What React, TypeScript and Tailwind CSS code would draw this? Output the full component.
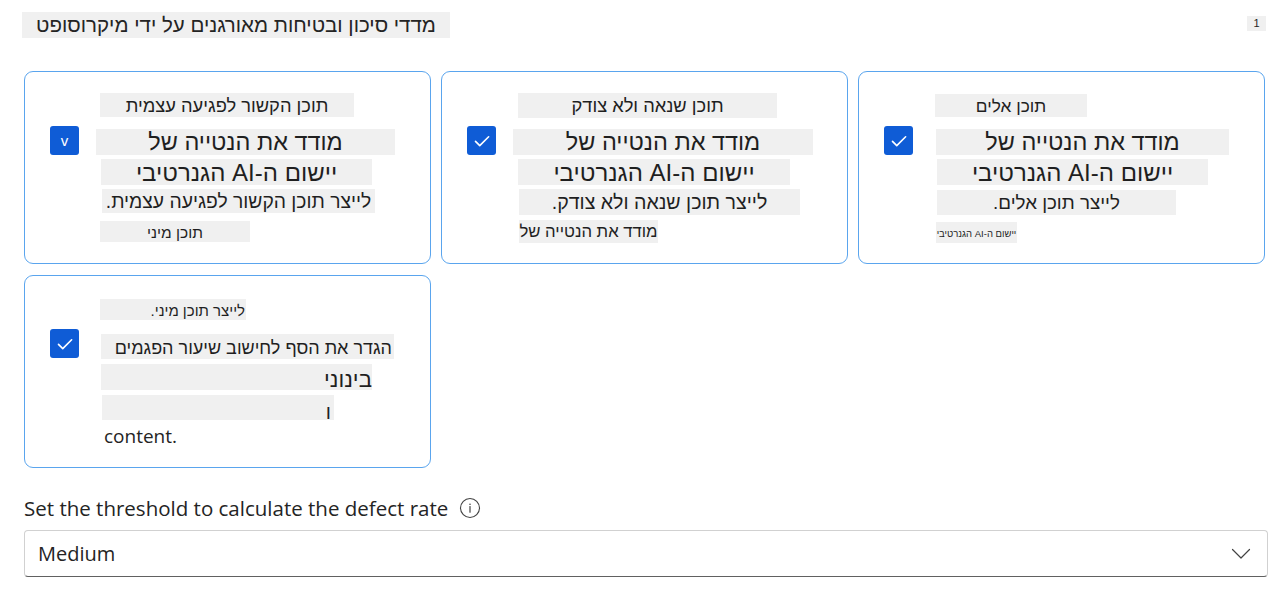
import type { ReactNode } from 'react';

const HE = "font-['Liberation_Sans']";

interface BoxProps {
  w: string;
  h: string;
  ml: string;
  mt: string;
  size: string;
  align?: string;
  children: ReactNode;
}

// grey translated-text strip
const Box = ({ w, h, ml, mt, size, align = 'justify-center', children }: BoxProps) => (
  <div
    dir="rtl"
    className={`flex items-center ${align} bg-[#f0f0f0] whitespace-nowrap leading-none text-[#1f1f1f] pt-[2px] ${HE} ${w} ${h} ${ml} ${mt} ${size}`}
  >
    {children}
  </div>
);

const CheckIcon = () => (
  <svg width="20" height="20" viewBox="0 0 16 16" fill="none">
    <path d="M2.8 8.3l3.4 3.4L13.3 4.6" stroke="white" strokeWidth="1.3" strokeLinecap="round" strokeLinejoin="round" />
  </svg>
);

const Checkbox = ({ mt, v }: { mt: string; v?: boolean }) => (
  <div className={`ml-[25px] ${mt} w-[29px] h-[29px] shrink-0 rounded-[3px] bg-[#0f5cd6] flex items-center justify-center`}>
    {v ? <span className="text-white text-[15px] leading-none font-['Liberation_Sans'] -mt-[1px]">v</span> : <CheckIcon />}
  </div>
);

const Card = ({ children }: { children: ReactNode }) => (
  <div className="flex items-start h-[193px] rounded-[9px] border border-[#5aa5ee] bg-white">{children}</div>
);

export default function App() {
  return (
    <div className="min-h-screen bg-white pl-6 pr-[11px]">
      {/* header */}
      <div className="flex items-start justify-between pt-3">
        <div
          dir="rtl"
          className={`-ml-[2px] w-[428px] h-[26px] flex items-center justify-center bg-[#f0f0f0] text-[20.5px] text-[#242424] leading-none ${HE}`}
        >
          מדדי סיכון ובטיחות מאורגנים על ידי מיקרוסופט
        </div>
        <div className="mt-[4px] mr-[2px] w-[19px] h-[15px] bg-[#f0f0f0] flex items-center justify-center text-[11px] text-[#242424] font-['Liberation_Sans'] leading-none">
          1
        </div>
      </div>

      {/* cards */}
      <div className="grid grid-cols-[407px_407px_407px] gap-x-[10px] gap-y-[11px] mt-[33px]">
        <Card>
          <Checkbox mt="mt-[54px]" v />
          <div className="flex flex-col -ml-[29px] w-full">
            <Box w="w-[254px]" h="h-[24px]" ml="ml-[50px]" mt="mt-[21px]" size="text-[18.3px]">תוכן הקשור לפגיעה עצמית</Box>
            <Box w="w-[299px]" h="h-[26px]" ml="ml-[46px]" mt="mt-[12px]" size="text-[23.5px]">מודד את הנטייה של</Box>
            <Box w="w-[271px]" h="h-[26px]" ml="ml-[51px]" mt="mt-[4px]" size="text-[24px]">יישום ה-AI הגנרטיבי</Box>
            <Box w="w-[273px]" h="h-[24px]" ml="ml-[52px]" mt="mt-[4px]" size="text-[19.3px]">לייצר תוכן הקשור לפגיעה עצמית.</Box>
            <Box w="w-[150px]" h="h-[21px]" ml="ml-[50px]" mt="mt-[8px]" size="text-[15.5px]">תוכן מיני</Box>
          </div>
        </Card>

        <Card>
          <Checkbox mt="mt-[54px]" />
          <div className="flex flex-col -ml-[29px] w-full">
            <Box w="w-[259px]" h="h-[25px]" ml="ml-[51px]" mt="mt-[21px]" size="text-[18.3px]">תוכן שנאה ולא צודק</Box>
            <Box w="w-[300px]" h="h-[26px]" ml="ml-[46px]" mt="mt-[11px]" size="text-[23.5px]">מודד את הנטייה של</Box>
            <Box w="w-[272px]" h="h-[26px]" ml="ml-[51px]" mt="mt-[4px]" size="text-[24px]">יישום ה-AI הגנרטיבי</Box>
            <Box w="w-[281px]" h="h-[26px]" ml="ml-[52px]" mt="mt-[4px]" size="text-[19.6px]">לייצר תוכן שנאה ולא צודק.</Box>
            <Box w="w-[139px]" h="h-[23px]" ml="ml-[52px]" mt="mt-[5px]" size="text-[16.7px]">מודד את הנטייה של</Box>
          </div>
        </Card>

        <Card>
          <Checkbox mt="mt-[54px]" />
          <div className="flex flex-col -ml-[29px] w-full">
            <Box w="w-[152px]" h="h-[23px]" ml="ml-[51px]" mt="mt-[22px]" size="text-[17.3px]">תוכן אלים</Box>
            <Box w="w-[293px]" h="h-[26px]" ml="ml-[52px]" mt="mt-[12px]" size="text-[23.5px]">מודד את הנטייה של</Box>
            <Box w="w-[271px]" h="h-[26px]" ml="ml-[53px]" mt="mt-[4px]" size="text-[24px]">יישום ה-AI הגנרטיבי</Box>
            <Box w="w-[239px]" h="h-[25px]" ml="ml-[53px]" mt="mt-[5px]" size="text-[18.8px]">לייצר תוכן אלים.</Box>
            <Box w="w-[81px]" h="h-[21px]" ml="ml-[52px]" mt="mt-[7px]" size="text-[9.5px]">יישום ה-AI הגנרטיבי</Box>
          </div>
        </Card>

        <Card>
          <Checkbox mt="mt-[53px]" />
          <div className="flex flex-col -ml-[29px] w-full">
            <Box w="w-[146px]" h="h-[21px]" ml="ml-[50px]" mt="mt-[23px]" size="text-[15px]" align="justify-start pr-[1px]">לייצר תוכן מיני.</Box>
            <Box w="w-[293px]" h="h-[25px]" ml="ml-[51px]" mt="mt-[14px]" size="text-[18px]" align="justify-start pr-[2px]">הגדר את הסף לחישוב שיעור הפגמים</Box>
            <Box w="w-[271px]" h="h-[26px]" ml="ml-[51px]" mt="mt-[5px]" size="text-[22.3px]" align="justify-start pt-[6px]">בינוני</Box>
            <Box w="w-[232px]" h="h-[25px]" ml="ml-[52px]" mt="mt-[5px]" size="text-[20px]" align="justify-start pr-[3px] pt-[8px]">ו</Box>
            <div className="ml-[54px] mt-[4px] text-[19px] leading-[24px] text-[#242424] font-['Open_Sans']">content.</div>
          </div>
        </Card>
      </div>

      {/* threshold */}
      <div className="flex items-center gap-[11px] mt-[27px] h-[26px]">
        <span className="text-[20.5px] leading-none text-[#242424] font-['Open_Sans']">
          Set the threshold to calculate the defect rate
        </span>
        <svg width="22" height="22" viewBox="0 0 22 22" fill="none">
          <circle cx="11" cy="11" r="9.5" stroke="#424242" strokeWidth="1.1" />
          <path d="M11 9.6v5.6" stroke="#424242" strokeWidth="1.2" strokeLinecap="round" />
          <circle cx="11" cy="7.2" r="0.8" fill="#424242" />
        </svg>
      </div>

      <div className="mt-[9px] h-[47px] flex items-center justify-between rounded-[4px] border border-[#d1d1d1] border-b-[#616161] pl-[13px] pr-[16px]">
        <span className="text-[20px] leading-none text-[#242424] font-['Open_Sans']">Medium</span>
        <svg width="20" height="12" viewBox="0 0 20 12" fill="none">
          <path d="M1.5 1.5l8.5 8.5 8.5-8.5" stroke="#424242" strokeWidth="1.2" strokeLinecap="round" strokeLinejoin="round" />
        </svg>
      </div>
    </div>
  );
}
